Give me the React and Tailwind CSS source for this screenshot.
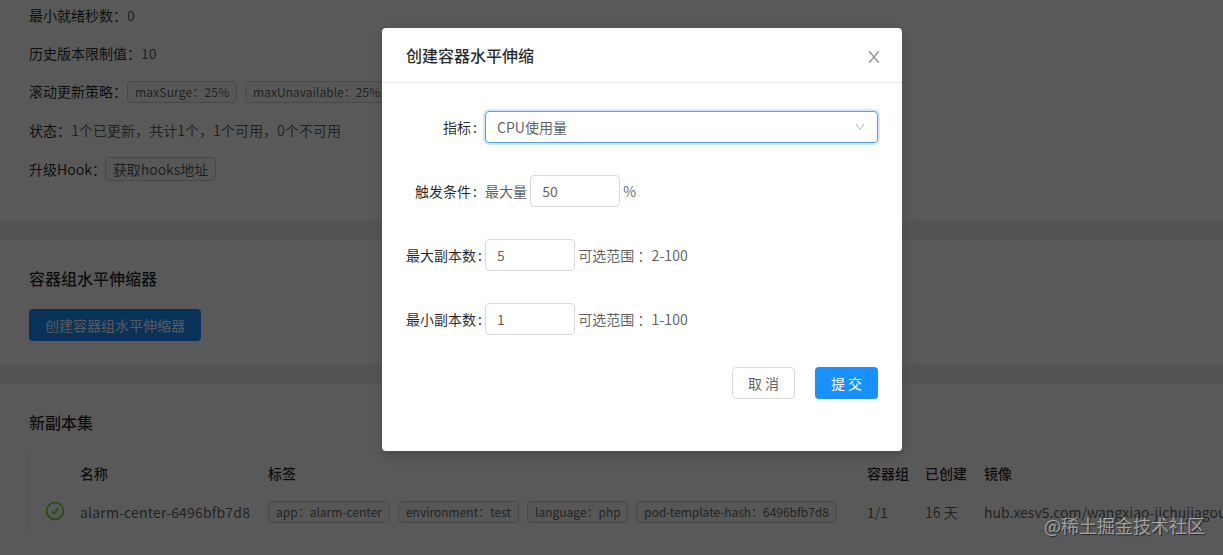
function Tag({ children, className = "" }) {
  return (
    <span
      className={`inline-flex h-[22px] items-center rounded border border-[#cfcfcf] bg-[#fafafa] px-[7px] text-xs whitespace-pre ${className}`}
    >
      {children}
    </span>
  );
}

function Info({ label, children, className = "" }) {
  return (
    <div className={`flex h-[22px] items-center whitespace-pre ${className}`}>
      <span className="text-black/85">{label}：</span>
      {children}
    </div>
  );
}

function Page() {
  return (
    <div className="flex h-full flex-col gap-5 bg-[#ebeff2]">
      <section className="h-[220px] shrink-0 bg-white pt-1 pl-[29px]">
        <Info label="最小就绪秒数">0</Info>
        <Info label="历史版本限制值" className="mt-4">10</Info>
        <Info label="滚动更新策略" className="mt-4">
          <div className="flex gap-2 pt-px">
            <Tag className="w-[110px] tracking-[0.17px]">maxSurge：25%</Tag>
            <Tag className="tracking-[0.04px]">maxUnavailable：25%</Tag>
          </div>
        </Info>
        <Info label="状态" className="mt-[17px] tracking-[0.04px]">1个已更新，共计1个，1个可用，0个不可用</Info>
        <Info label="升级Hook" className="mt-[17px]">
          <span className="-ml-px inline-flex h-6 w-[111px] items-center rounded border border-[#cfcfcf] bg-[#fafafa] px-[7px] tracking-[-0.05px]">
            获取hooks地址
          </span>
        </Info>
      </section>

      <section className="h-[124px] shrink-0 bg-white pt-[26px] pl-[29px]">
        <h2 className="text-base leading-6 font-medium text-black/85">容器组水平伸缩器</h2>
        <button className="mt-[19px] flex h-8 items-center rounded bg-[#1890ff] px-4 text-white">创建容器组水平伸缩器</button>
      </section>

      <section className="flex-1 bg-white pt-[26px] pl-[29px]">
        <h2 className="text-base leading-6 font-medium text-black/85">新副本集</h2>
        <div className="mt-[19px] h-[78px] w-[1300px] rounded border border-[#efefef] whitespace-nowrap">
          <div className="grid h-[37px] grid-cols-[50px_188px_599px_58px_59px_1fr] items-center font-medium text-black/85">
            <span></span>
            <span>名称</span>
            <span>标签</span>
            <span>容器组</span>
            <span>已创建</span>
            <span>镜像</span>
          </div>
          <div className="grid h-[39px] grid-cols-[50px_188px_599px_58px_59px_1fr] items-center pt-[3px]">
            <svg
              viewBox="0 0 20 20"
              className="-mt-[3px] ml-[15px] size-5 text-[#60d424]"
              fill="none"
              stroke="currentColor"
              strokeWidth="1.5"
            >
              <circle cx="10" cy="10" r="8.4" />
              <path d="M6.8 10.2l2.3 2.5 4.1-5.4" />
            </svg>
            <span className="tracking-[0.18px]">alarm-center-6496bfb7d8</span>
            <span className="flex gap-2">
              <Tag>app：alarm-center</Tag>
              <Tag>environment：test</Tag>
              <Tag className="w-[101px]">language：php</Tag>
              <Tag className="w-[201px] tracking-[-0.04px]">pod-template-hash：6496bfb7d8</Tag>
            </span>
            <span>1/1</span>
            <span>16 天</span>
            <span>hub.xesv5.com/wangxiao-jichujiagou</span>
          </div>
        </div>
      </section>
    </div>
  );
}

function Field({ label, children, className = "" }) {
  return (
    <div className={`flex h-8 items-center whitespace-pre ${className}`}>
      <div className="flex w-[79px] shrink-0 justify-end text-black/85">
        <span>{label}</span>
        <span className="mr-2 ml-0.5">:</span>
      </div>
      {children}
    </div>
  );
}

function WideField({ label, children }) {
  return (
    <div className="mt-8 flex h-8 items-center whitespace-pre">
      <div className="flex w-[79px] shrink-0 text-black/85">
        <span className="shrink-0">{label}</span>
        <span className="ml-0.5">:</span>
      </div>
      {children}
    </div>
  );
}

function NumberBox({ children }) {
  return (
    <div className="flex h-8 w-[90px] items-center rounded border border-[#d9d9d9] bg-white px-[11px]">{children}</div>
  );
}

function Dialog() {
  return (
    <div
      role="dialog"
      className="mt-7 ml-[382px] h-[423px] w-[520px] rounded bg-white shadow-[0_4px_12px_rgba(0,0,0,0.15)]"
    >
      <header className="flex h-[55px] items-center justify-between border-b border-[#e8e8e8] pr-[19px] pl-6">
        <h1 className="text-base leading-6 font-medium text-black/85">创建容器水平伸缩</h1>
        <button aria-label="关闭" className="mt-1 text-black/45">
          <svg viewBox="0 0 1024 1024" className="size-[18px]" fill="currentColor">
            <path d="M563.8 512l262.5-312.9c4.4-5.2.7-13.1-6.1-13.1h-79.8c-4.7 0-9.2 2.1-12.3 5.7L511.6 449.8 295.1 191.7c-3-3.6-7.5-5.7-12.3-5.7H203c-6.8 0-10.5 7.9-6.1 13.1L459.4 512 196.9 824.9A7.95 7.95 0 0 0 203 838h79.8c4.7 0 9.2-2.1 12.3-5.7l216.5-258.1 216.5 258.1c3 3.6 7.5 5.7 12.3 5.7h79.8c6.8 0 10.5-7.9 6.1-13.1L563.8 512z" />
          </svg>
        </button>
      </header>
      <div className="px-6 pt-7">
        <Field label="指标">
          <div className="flex h-8 flex-1 items-center justify-between rounded border border-[#4ea1e6] px-[11px] shadow-[0_0_0_2px_rgba(24,144,255,0.2)]">
            <span>CPU使用量</span>
            <svg viewBox="0 0 1024 1024" className="size-3 text-black/25" fill="currentColor">
              <path d="M884 256h-75c-5.1 0-9.9 2.5-12.9 6.6L512 654.2 227.9 262.6c-3-4.1-7.8-6.6-12.9-6.6h-75c-6.5 0-10.3 7.4-6.5 12.7l352.6 486.1c12.8 17.6 39 17.6 51.7 0l352.6-486.1c3.9-5.3.1-12.7-6.4-12.7z" />
            </svg>
          </div>
        </Field>
        <Field label="触发条件" className="mt-8">
          <span>最大量 </span>
          <NumberBox>50</NumberBox>
          <span> %</span>
        </Field>
        <WideField label="最大副本数">
          <NumberBox>5</NumberBox>
          <span className="tracking-[0.05px]"> 可选范围 ：2-100</span>
        </WideField>
        <WideField label="最小副本数">
          <NumberBox>1</NumberBox>
          <span className="tracking-[0.05px]"> 可选范围 ：1-100</span>
        </WideField>
        <div className="mt-8 flex justify-end gap-5">
          <button className="flex h-8 w-[63px] items-center justify-center rounded border border-[#d9d9d9]">取 消</button>
          <button className="flex h-8 w-[63px] items-center justify-center rounded bg-[#1890ff] text-white">提 交</button>
        </div>
      </div>
    </div>
  );
}

export default function App() {
  return (
    <div className="relative h-[555px] w-[1223px] overflow-hidden font-['Noto_Sans_CJK_SC',sans-serif] text-sm leading-[22px] text-black/65">
      <Page />
      <div className="absolute inset-0 flex items-start bg-black/65">
        <Dialog />
      </div>
      <div className="absolute right-[18px] bottom-[17px] text-lg leading-[26px] text-white/50 [text-shadow:1px_1px_1px_rgba(0,0,0,0.6)]">
        @稀土掘金技术社区
      </div>
    </div>
  );
}
